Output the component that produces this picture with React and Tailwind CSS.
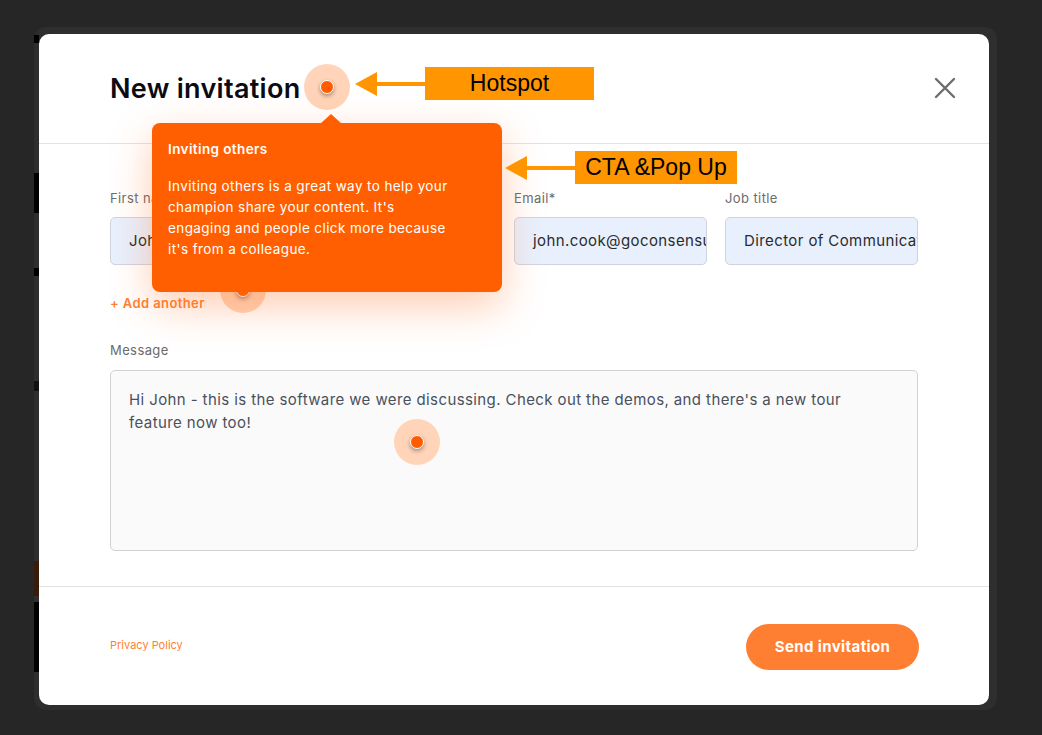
const Hotspot = ({ className }) => (
  <div className={`absolute w-[46px] h-[46px] rounded-full bg-[#ffcfb0]/90 flex items-center justify-center ${className}`}>
    <div className="w-[14px] h-[14px] rounded-full bg-[#ff5c00] border border-white shadow-[0_2px_4px_rgba(0,0,0,0.35)]"></div>
  </div>
);

const Callout = ({ label, className, boxClass }) => (
  <div className={`absolute flex items-center ${className}`}>
    <svg width="70" height="26" viewBox="0 0 70 26" className="shrink-0">
      <polygon points="0,13 22,1 22,25" fill="#ff9500" />
      <rect x="20" y="11" width="50" height="4" fill="#ff9500" />
    </svg>
    <div className={`h-[33px] bg-[#ff9500] flex items-center justify-center text-black text-[23px] tracking-normal font-['Liberation_Sans',Arial,sans-serif] ${boxClass}`}>
      {label}
    </div>
  </div>
);

const Field = ({ label, value, width }) => (
  <div className={`flex flex-col gap-[9px] ${width}`}>
    <label className="text-[13px] text-[#6b6b6b] leading-5">{label}</label>
    <div className="h-[48px] rounded-[5px] border border-[#cfd4dc] bg-[#e8f0fe] pl-[18px] flex items-center overflow-hidden whitespace-nowrap text-[15px] text-[#2b2b2b]">
      {value}
    </div>
  </div>
);

export default function App() {
  return (
    <div className="w-[1042px] h-[735px] bg-[#262626] pl-[34px] pt-[27px] font-['Inter',sans-serif] tracking-[0.4px] overflow-hidden">
      <div className="w-[963px] h-[683px] bg-[#2e2e2e] rounded-[12px] flex pt-[7px] pr-[8px]">
        <div className="w-[5px] flex flex-col">
          <div className="h-[8px] bg-black mt-[1px]"></div>
          <div className="h-[40px] mt-[130px] bg-black"></div>
          <div className="h-[8px] mt-[55px] bg-black"></div>
          <div className="h-[10px] mt-[105px] bg-[#111]"></div>
          <div className="h-[35px] mt-[170px] bg-[#3a1a08]"></div>
          <div className="h-[70px] mt-[6px] bg-black"></div>
        </div>
        <div className="relative w-[950px] h-[671px] bg-white rounded-[10px] flex flex-col">
          {/* header */}
          <div className="h-[110px] shrink-0 border-b border-[#e2e2e2] flex items-center justify-between pl-[71px] pr-[33px] pt-[2px]">
            <h1 className="text-[27px] font-semibold text-[#0b0b14] tracking-[0.3px]">New invitation</h1>
            <svg width="22" height="22" viewBox="0 0 22 22" className="-mt-[4px]">
              <path d="M2 2 L20 20 M20 2 L2 20" stroke="#6d6d6d" strokeWidth="2.4" strokeLinecap="round" />
            </svg>
          </div>

          {/* body */}
          <div className="flex flex-col px-[71px] pt-[44px] h-[443px] border-b border-[#e2e2e2] shrink-0">
            <div className="flex gap-[18px] shrink-0">
              <Field label="First name" value="John" width="w-[184px]" />
              <Field label="Last name" value="Cook" width="w-[184px]" />
              <Field label="Email*" value="john.cook@goconsensus.com" width="w-[193px]" />
              <Field label="Job title" value="Director of Communications" width="w-[193px]" />
            </div>
            <div className="mt-[28px] text-[13px] font-semibold text-[#ff7f32] leading-5 shrink-0">+ Add another</div>
            <div className="mt-[27px] text-[13px] text-[#6b6b6b] leading-5 shrink-0">Message</div>
            <div className="mt-[10px] h-[181px] shrink-0 rounded-[5px] border border-[#cfd1d5] bg-[#fafafa] pl-[18px] pr-[60px] pt-[17px] text-[15px] leading-[23px] text-[#4a505c]">
              Hi John - this is the software we were discussing. Check out the demos, and there's a new tour feature now too!
            </div>
          </div>

          {/* footer */}
          <div className="flex items-center justify-between pl-[71px] pr-[70px] pt-[2px] flex-1">
            <span className="text-[11px] text-[#ff7f32] tracking-normal -mt-[4px]">Privacy Policy</span>
            <button className="h-[46px] w-[173px] rounded-full bg-[#ff7f32] text-white text-[15px] font-bold">Send invitation</button>
          </div>

          {/* overlays */}
          <Hotspot className="left-[265px] top-[30px]" />
          <Hotspot className="left-[181px] top-[233px]" />
          <Hotspot className="left-[355px] top-[385px]" />

          <div className="absolute left-[113px] top-[89px] w-[350px] h-[169px] bg-[#ff5f00] rounded-[8px] px-[16px] pt-[16px] text-white text-[13.5px] shadow-[0_14px_40px_rgba(255,110,30,0.35)]">
            <div className="absolute -top-[9px] left-[168px] w-0 h-0 border-l-[11px] border-r-[11px] border-b-[10px] border-l-transparent border-r-transparent border-b-[#ff5f00]"></div>
            <div className="font-semibold leading-5">Inviting others</div>
            <p className="mt-[17px] leading-[21px] whitespace-nowrap">
              Inviting others is a great way to help your<br />
              champion share your content. It's<br />
              engaging and people click more because<br />
              it's from a colleague.
            </p>
          </div>

          <Callout label="Hotspot" className="left-[316px] top-[33px]" boxClass="w-[169px]" />
          <Callout label="CTA &Pop Up" className="left-[466px] top-[117px]" boxClass="w-[162px]" />
        </div>
      </div>
    </div>
  );
}
